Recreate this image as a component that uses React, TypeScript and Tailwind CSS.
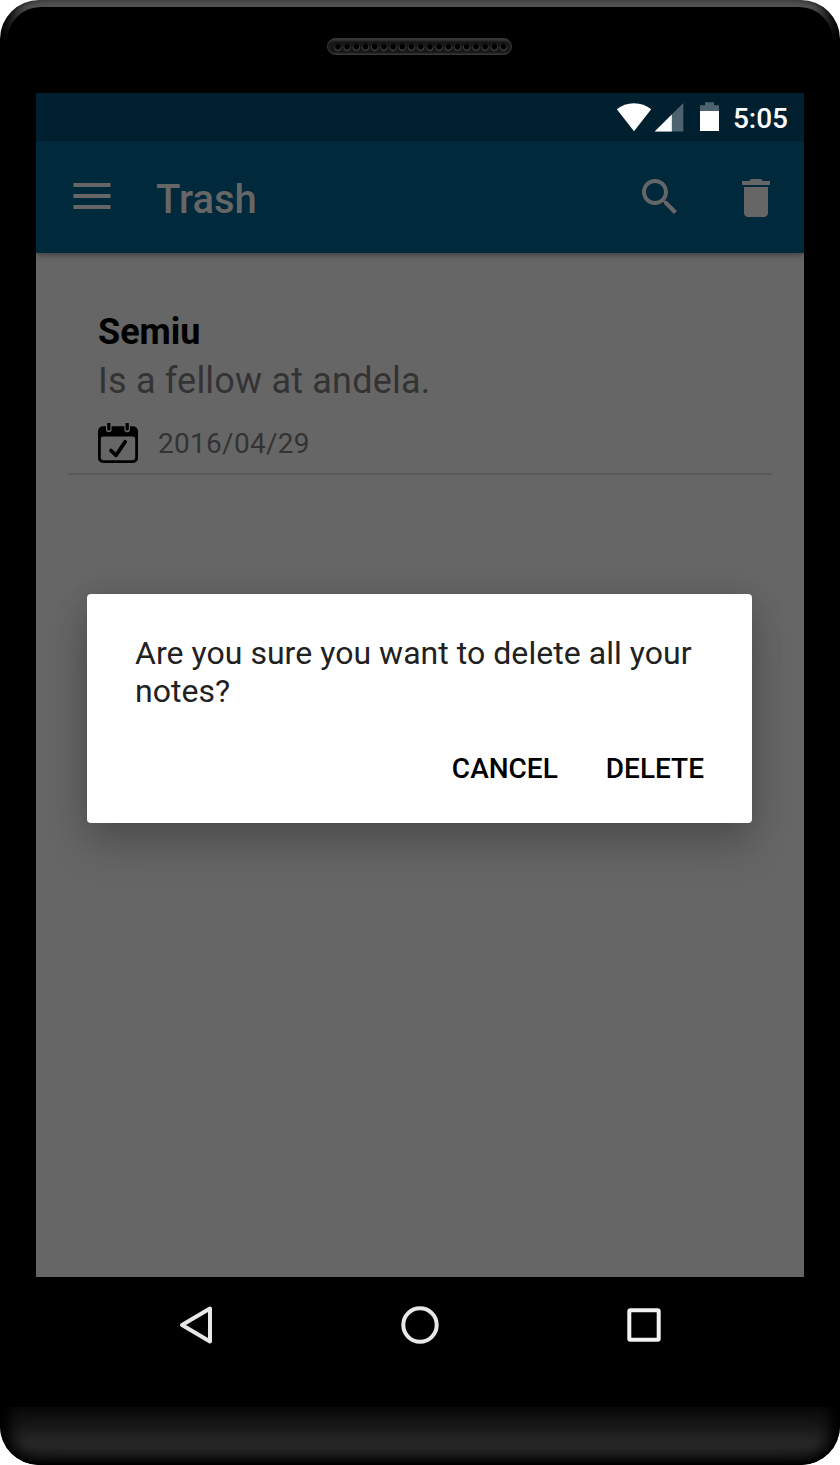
import React from "react";

const HOLES = Array.from({ length: 19 }, (_, i) => 10.9 + i * 9.2);

function Speaker() {
  return (
    <svg width="185" height="17" viewBox="0 0 185 17" className="mr-px block">
      <defs>
        <linearGradient id="grille" x1="0" y1="0" x2="0" y2="1">
          <stop offset="0" stopColor="#3c3c3c" />
          <stop offset="0.25" stopColor="#1c1c1c" />
          <stop offset="0.8" stopColor="#1a1a1a" />
          <stop offset="1" stopColor="#323232" />
        </linearGradient>
        <linearGradient id="rim" x1="0" y1="0" x2="0" y2="1">
          <stop offset="0" stopColor="#111" />
          <stop offset="1" stopColor="#5a5a5a" />
        </linearGradient>
      </defs>
      <rect x="0.5" y="0.5" width="184" height="16" rx="8" fill="url(#grille)" stroke="#383838" />
      <rect x="3" y="3.5" width="179" height="11" rx="5.5" fill="#171717" />
      {HOLES.map((x) => (
        <circle key={x} cx={x} cy="9" r="3.4" fill="#000" stroke="url(#rim)" strokeWidth="1" />
      ))}
    </svg>
  );
}

function StatusBar() {
  return (
    <div className="flex h-12 items-center justify-end bg-[#002030] pr-4 text-white">
      <svg width="103" height="30" viewBox="0 0 103 30" className="block">
        <path d="M0.8 7.3Q8 1.2 18 1.2T35.2 7.3L18 29.2Z" fill="#fff" />
        <path d="M67.3 1V29.6H38.7Z" fill="#4d6370" />
        <path d="M55.8 12.5V29.6H38.7Z" fill="#fff" />
        <path d="M89 0.2h9v3h5v6H84v-6h5z" fill="#4d6370" />
        <path d="M84 9h19v20H84z" fill="#fff" />
      </svg>
      <span className="ml-[14px] mt-[3px] text-[28px] leading-8 font-medium">5:05</span>
    </div>
  );
}

function Toolbar() {
  return (
    <div className="relative flex h-28 items-center bg-[#00293b] pr-6 pl-[37px] text-[#666] shadow-[0_2px_6px_rgba(0,0,0,0.4)]">
      <svg width="38" height="26" viewBox="0 0 38 26" fill="currentColor" className="mb-[2px] block">
        <path d="M.4 0h37.2v4H.4zM.4 11h37.2v4H.4zM.4 22h37.2v4H.4z" />
      </svg>
      <h1 className="mt-1.5 ml-[45px] flex-1 text-[40px] leading-[48px] font-medium">Trash</h1>
      <svg width="48" height="48" viewBox="0 0 24 24" fill="currentColor" className="block">
        <path d="M15.5 14h-.79l-.28-.27C15.41 12.59 16 11.11 16 9.5 16 5.91 13.09 3 9.5 3S3 5.91 3 9.5 5.91 16 9.5 16c1.61 0 3.09-.59 4.23-1.57l.27.28v.79l5 4.99L20.49 19l-4.99-5zm-6 0C7.01 14 5 11.99 5 9.5S7.01 5 9.5 5 14 7.01 14 9.5 11.99 14 9.5 14z" />
      </svg>
      <svg width="48" height="48" viewBox="0 0 24 24" fill="currentColor" className="ml-12 block">
        <path d="M6 20c0 1.1.9 2 2 2h8c1.1 0 2-.9 2-2V7H6v13zM19 4h-3.5l-1-1h-5l-1 1H5v2h14V4z" />
      </svg>
    </div>
  );
}

function NoteCard() {
  return (
    <article className="mx-8 mt-8 h-[190px] rounded-[3px] border-b-2 border-[#5a5a5a] bg-[#666] pt-[26px] pl-[30px] shadow-[inset_0_1px_0_#646464,inset_1px_0_0_#646464,inset_-1px_0_0_#646464]">
      <h2 className="text-[36px] leading-[43px] font-bold text-black">Semiu</h2>
      <p className="mt-[6px] text-[36px] leading-[43px] tracking-[0.2px] text-[#333]">Is a fellow at andela.</p>
      <div className="mt-5 flex items-center">
        <svg width="40" height="40" viewBox="0 0 40 40" className="block">
          <path d="M5 3.2h30a5 5 0 0 1 5 5V35a5 5 0 0 1-5 5H5a5 5 0 0 1-5-5V8.2a5 5 0 0 1 5-5z" fill="#000" />
          <rect x="2.8" y="13.6" width="34.4" height="23.6" rx="2.4" fill="#666" />
          <path d="M8 0v6.500a2.800 2.800 0 0 0 5.600 0V0M26.400 0v6.500a2.800 2.800 0 0 0 5.600 0V0" fill="#666" />
          <path d="M9.200 0h3.200v6a1.600 1.600 0 0 1-3.200 0zM27.600 0h3.200v6a1.600 1.600 0 0 1-3.200 0z" fill="#000" />
          <path d="M13 27.500l5 4.800L27.200 18.800" fill="none" stroke="#000" strokeWidth="3.800" strokeLinecap="round" strokeLinejoin="round" />
        </svg>
        <time className="mt-[2px] ml-5 text-[28px] leading-8 tracking-[0.28px] text-[#333]">2016/04/29</time>
      </div>
    </article>
  );
}

function ConfirmDialog() {
  return (
    <div
      role="dialog"
      className="absolute top-[501px] left-[51px] h-[229px] w-[665px] rounded bg-white px-12 pt-10 shadow-[0_26px_44px_rgba(0,0,0,0.16),0_4px_32px_rgba(0,0,0,0.16)]"
    >
      <p className="text-[32px] leading-[38px] tracking-[0.04px] text-[#212121]">
        Are you sure you want to delete all your notes?
      </p>
      <div className="mt-[41px] flex justify-end gap-12 text-[28px] leading-9 font-medium text-black">
        <button type="button">CANCEL</button>
        <button type="button">DELETE</button>
      </div>
    </div>
  );
}

function NavigationKeys() {
  return (
    <nav className="flex h-24 items-center justify-center gap-[184px]">
      <svg width="40" height="40" viewBox="0 0 40 40" fill="none" stroke="#e8e8e8" strokeWidth="4" strokeLinejoin="round" className="block">
        <path d="M6 20L34 3.500V36.500Z" />
      </svg>
      <svg width="40" height="40" viewBox="0 0 40 40" fill="none" stroke="#e8e8e8" strokeWidth="4" className="block">
        <circle cx="20" cy="20" r="16.700" />
      </svg>
      <svg width="40" height="40" viewBox="0 0 40 40" fill="none" stroke="#f2f2f2" strokeWidth="4" className="block">
        <rect x="5.300" y="5.300" width="29.400" height="29.400" rx="1" />
      </svg>
    </nav>
  );
}

export default function App() {
  return (
    <div className="h-[1465px] w-[840px] bg-white font-['Roboto',sans-serif]">
      <div className="flex h-full w-full flex-col overflow-hidden rounded-[39px] bg-black bg-[linear-gradient(to_bottom,#484848_0px,#525252_7px,#303030_18px,#000_42px)] pt-[7px] shadow-[inset_12px_0_8px_-7px_#000,inset_-12px_0_8px_-7px_#000]">
        <div className="mx-[7px] flex h-[86px] justify-center rounded-t-[34px] bg-black pt-[31px]">
          <Speaker />
        </div>
        <main className="relative mx-9 h-[1184px] overflow-hidden bg-[#666]">
          <StatusBar />
          <Toolbar />
          <NoteCard />
          <ConfirmDialog />
        </main>
        <NavigationKeys />
        <div className="mt-auto h-[58px] rounded-b-[39px] bg-[linear-gradient(to_bottom,#0b0b0b_0%,#151515_28%,#262626_60%,#252525_70%,#161616_86%,#000_100%)] shadow-[inset_16px_0_14px_-6px_#000,inset_-16px_0_14px_-6px_#000]" />
      </div>
    </div>
  );
}
